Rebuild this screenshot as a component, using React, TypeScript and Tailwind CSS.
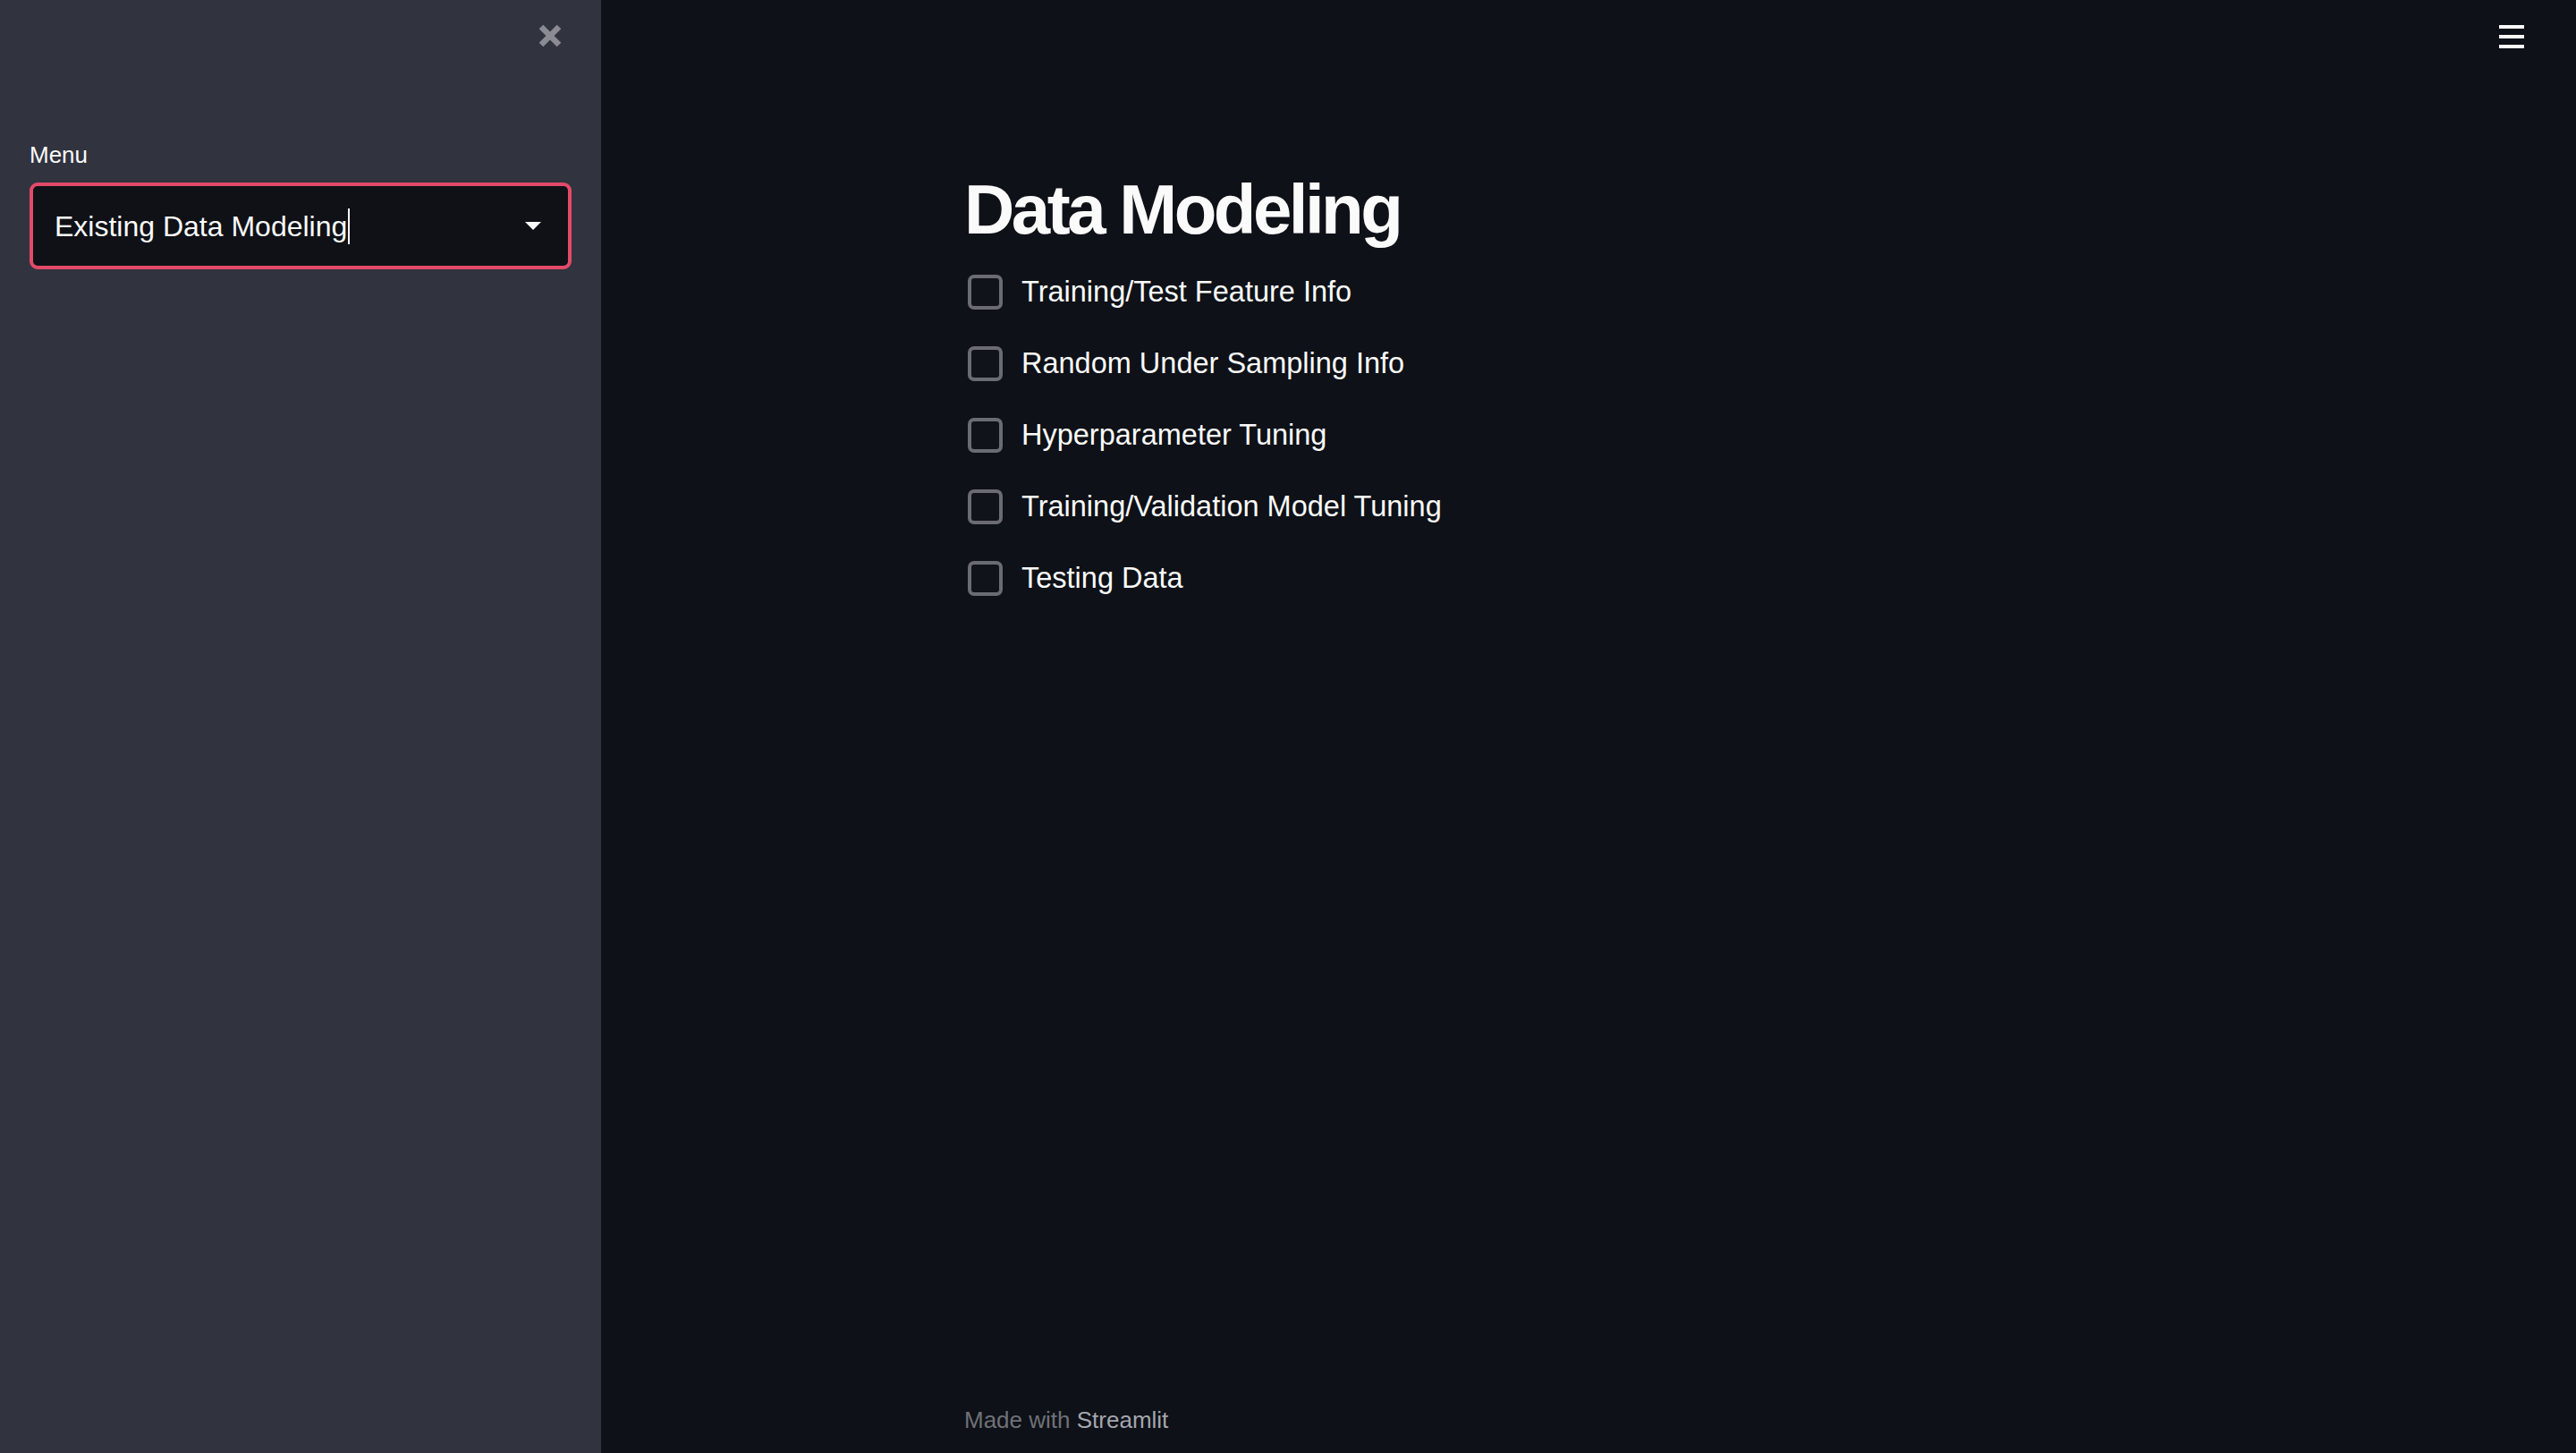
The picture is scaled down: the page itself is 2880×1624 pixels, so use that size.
import { ChangeEvent, useState } from "react";

const sections = [
  "Training/Test Feature Info",
  "Random Under Sampling Info",
  "Hyperparameter Tuning",
  "Training/Validation Model Tuning",
  "Testing Data",
];

const body = { fontFamily: '"Liberation Sans", Arial, sans-serif' };

function CheckRow({ label }: { label: string }) {
  const [checked, setChecked] = useState(false);

  return (
    <label className="flex h-[80px] cursor-pointer items-center gap-[21px]">
      <input
        type="checkbox"
        className="sr-only"
        checked={checked}
        onChange={(e: ChangeEvent<HTMLInputElement>) => setChecked(e.target.checked)}
      />
      <span
        className={`h-[39px] w-[39px] rounded-[7px] border-[4px] ${
          checked ? "border-[#e34a69] bg-[#e34a69]" : "border-[#6b6c73] bg-[#11131b]"
        }`}
      />
      <span className="text-[32.5px] text-[#fafafa]">{label}</span>
    </label>
  );
}

function Sidebar() {
  return (
    <aside className="flex h-full w-[672px] flex-none flex-col bg-[#31333f] px-[33px]">
      <div className="flex h-[80px] items-center justify-end pr-[10px]">
        <button className="flex h-[28px] w-[28px] items-center justify-center">
          <svg width="28" height="28" viewBox="0 0 28 28">
            <path
              d="M4 4 L24 24 M24 4 L4 24"
              stroke="#8b8c93"
              strokeWidth="6.5"
              strokeLinecap="butt"
            />
          </svg>
        </button>
      </div>
      <div className="mt-[80px] text-[26px] leading-none text-[#fafafa]">Menu</div>
      <div className="mt-[18px] flex h-[97px] items-center rounded-[9px] border-[4px] border-[#e34a69] bg-[#0f1117] pl-[24px] pr-[30px]">
        <span className="text-[32px] text-[#fafafa]">Existing Data Modeling</span>
        <span className="ml-[1px] h-[40px] w-[2px] bg-[#fafafa]" />
        <span className="flex-1" />
        <svg width="18" height="10" viewBox="0 0 18 10">
          <path d="M0 0 H18 L9 9 Z" fill="#fafafa" />
        </svg>
      </div>
    </aside>
  );
}

export default function App() {
  return (
    <div className="flex h-screen w-full overflow-hidden bg-[#0e1117]" style={body}>
      <Sidebar />
      <main className="flex h-full flex-1 flex-col">
        <div className="flex h-[82px] items-center justify-end pr-[58px]">
          <button className="flex flex-col gap-[7px]">
            <span className="h-[4px] w-[28px] bg-[#fafafa]" />
            <span className="h-[4px] w-[28px] bg-[#fafafa]" />
            <span className="h-[4px] w-[28px] bg-[#fafafa]" />
          </button>
        </div>
        <div className="mx-auto flex w-full max-w-[1460px] flex-1 flex-col px-[32px]">
          <h1 className="mt-[113px] text-[78px] font-bold leading-none tracking-[-0.045em] text-[#fafafa]">
            Data Modeling
          </h1>
          <div className="mt-[13px] flex flex-col pl-[4px]">
            {sections.map((s) => (
              <CheckRow key={s} label={s} />
            ))}
          </div>
          <div className="flex-1" />
          <footer className="pb-[17px] text-[26px] text-[#6f7178]">
            Made with <span className="text-[#a4a6ad]">Streamlit</span>
          </footer>
        </div>
      </main>
    </div>
  );
}
